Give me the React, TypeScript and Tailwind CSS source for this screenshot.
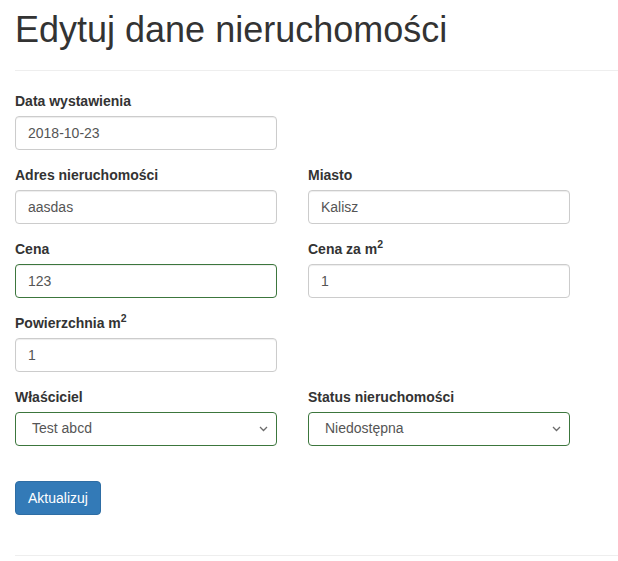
import React from "react";

const font = { fontFamily: '"Liberation Sans", Arial, sans-serif' };

function Label({ children }: { children: React.ReactNode }) {
  return (
    <label className="block mb-[5px] text-[14px] leading-[20px] font-bold text-[#333]">
      {children}
    </label>
  );
}

function M2() {
  return (
    <>
      m<sup className="text-[75%] leading-[0] relative top-[-0.5em] align-baseline">2</sup>
    </>
  );
}

function TextInput({ value, success }: { value: string; success?: boolean }) {
  return (
    <input
      readOnly
      defaultValue={value}
      className={`block w-[262px] h-[34px] px-[12px] py-[6px] text-[14px] leading-[20px] text-[#555] bg-white rounded-[4px] border outline-none shadow-[inset_0_1px_1px_rgba(0,0,0,0.075)] ${
        success ? "border-[#3c763d]" : "border-[#ccc]"
      }`}
      style={font}
    />
  );
}

function SelectBox({ value }: { value: string }) {
  return (
    <div className="relative w-[262px] h-[34px]">
      <div className="flex items-center w-full h-full pl-[16px] pr-[28px] text-[14px] text-[#555] bg-white rounded-[4px] border border-[#3c763d]">
        {value}
      </div>
      <svg
        className="absolute right-[9px] top-[14px]"
        width="9"
        height="6"
        viewBox="0 0 9 6"
        fill="none"
      >
        <path d="M1 1l3.5 3.5L8 1" stroke="#6b6b6b" strokeWidth="1.3" />
      </svg>
    </div>
  );
}

function Group({ children }: { children: React.ReactNode }) {
  return <div className="mb-[15px]">{children}</div>;
}

export default function App() {
  return (
    <div className="bg-white min-h-[561px] pl-[15px] text-[#333]" style={font}>
      <h1 className="pt-[10px] text-[36px] leading-[39.6px] font-normal text-[#333]">
        Edytuj dane nieruchomości
      </h1>
      <div className="mt-[20px] border-t border-[#eee]" />
      <div className="mt-[20px]">
        <div className="grid grid-cols-[262px_262px] gap-x-[31px]">
          <Group>
            <Label>Data wystawienia</Label>
            <TextInput value="2018-10-23" />
          </Group>
          <div />
          <Group>
            <Label>Adres nieruchomości</Label>
            <TextInput value="aasdas" />
          </Group>
          <Group>
            <Label>Miasto</Label>
            <TextInput value="Kalisz" />
          </Group>
          <Group>
            <Label>Cena</Label>
            <TextInput value="123" success />
          </Group>
          <Group>
            <Label>
              Cena za <M2 />
            </Label>
            <TextInput value="1" />
          </Group>
          <Group>
            <Label>
              Powierzchnia <M2 />
            </Label>
            <TextInput value="1" />
          </Group>
          <div />
          <Group>
            <Label>Właściciel</Label>
            <SelectBox value="Test abcd" />
          </Group>
          <Group>
            <Label>Status nieruchomości</Label>
            <SelectBox value="Niedostępna" />
          </Group>
        </div>
        <button
          className="mt-[20px] h-[34px] px-[12px] text-[14px] leading-[20px] text-white bg-[#337ab7] border border-[#2e6da4] rounded-[4px]"
          style={font}
        >
          Aktualizuj
        </button>
      </div>
      <div className="mt-[40px] border-t border-[#eee]" />
    </div>
  );
}
